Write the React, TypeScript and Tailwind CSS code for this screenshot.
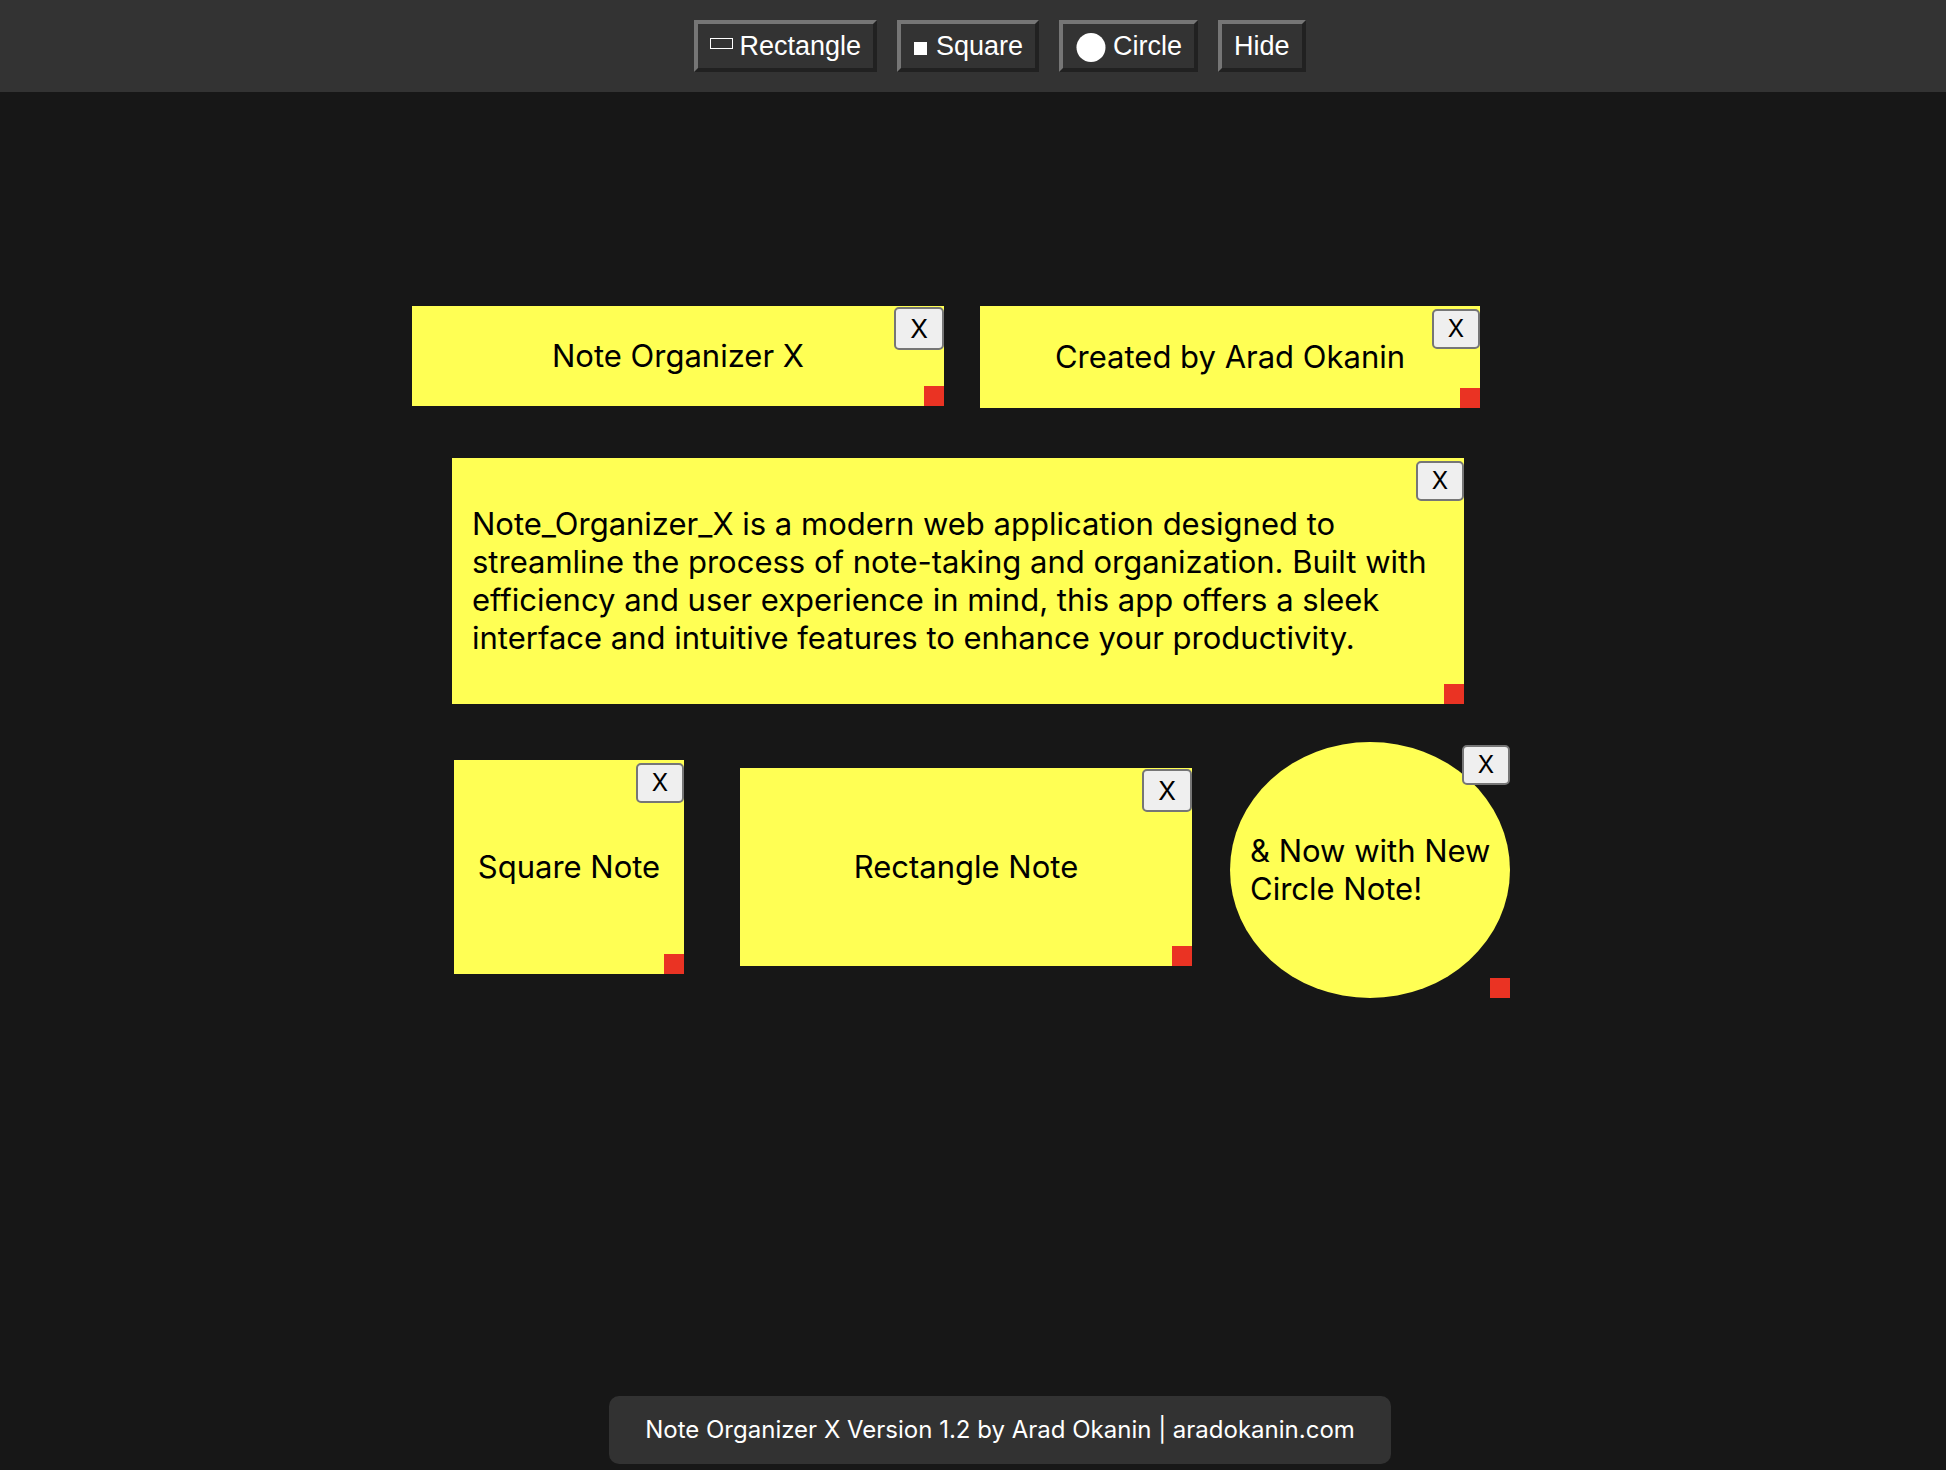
import { useState } from "react";
import type { ReactNode } from "react";

type Note = {
  id: number;
  text: string;
  place: string;
  size: string;
  round?: boolean;
  bigClose?: boolean;
};

const initialNotes: Note[] = [
  {
    id: 1,
    text: "Note Organizer X",
    place: "left-[412px] top-[214px]",
    size: "w-[532px] h-[100px]",
    bigClose: true,
  },
  {
    id: 2,
    text: "Created by Arad Okanin",
    place: "left-[980px] top-[214px]",
    size: "w-[500px] h-[102px]",
  },
  {
    id: 3,
    text: "Note_Organizer_X is a modern web application designed to streamline the process of note-taking and organization. Built with efficiency and user experience in mind, this app offers a sleek interface and intuitive features to enhance your productivity.",
    place: "left-[452px] top-[366px]",
    size: "w-[1012px] h-[246px]",
  },
  {
    id: 4,
    text: "Square Note",
    place: "left-[454px] top-[668px]",
    size: "w-[230px] h-[214px]",
  },
  {
    id: 5,
    text: "Rectangle Note",
    place: "left-[740px] top-[676px]",
    size: "w-[452px] h-[198px]",
    bigClose: true,
  },
  {
    id: 6,
    text: "& Now with New Circle Note!",
    place: "left-[1230px] top-[650px]",
    size: "w-[280px] h-[256px]",
    round: true,
  },
];

function ToolButton({ children, onClick }: { children: ReactNode; onClick?: () => void }) {
  return (
    <button
      type="button"
      onClick={onClick}
      className="flex h-[52px] items-center gap-1.5 border-4 border-t-[#767676] border-r-[#212121] border-b-[#212121] border-l-[#767676] px-3 font-['Liberation_Sans',Arial,sans-serif] text-[27px] leading-8 text-white"
    >
      {children}
    </button>
  );
}

function NoteCard({ note, onClose }: { note: Note; onClose: () => void }) {
  return (
    <article
      className={`absolute flex items-center justify-center bg-[#ffff54] text-[31px] leading-[38px] text-black ${note.place} ${note.size} ${
        note.round ? "rounded-[50%] pr-3 pl-5" : "px-5"
      }`}
    >
      <p>{note.text}</p>
      <button
        type="button"
        aria-label={`Close ${note.text}`}
        onClick={onClose}
        className={`absolute right-0 flex items-center justify-center rounded-[5px] border-2 border-[#767676] bg-[#efefef] leading-8 ${
          note.bigClose ? "top-px h-[43px] w-[50px] text-[26px]" : "top-[3px] h-10 w-12 text-2xl"
        }`}
      >
        X
      </button>
      <span className="absolute right-0 bottom-0 size-5 cursor-se-resize bg-[#ea3323]" />
    </article>
  );
}

export default function App() {
  const [notes, setNotes] = useState(initialNotes);
  const [hidden, setHidden] = useState(false);

  const addNote = (text: string, size: string, round = false) =>
    setNotes((all) => [
      ...all,
      { id: Date.now(), text, size, round, place: "left-[80px] top-[80px]" },
    ]);

  return (
    <div className="flex min-h-screen flex-col overflow-hidden bg-[#171717] font-[Inter,sans-serif]">
      <header className="flex h-[92px] items-center justify-center gap-5 bg-[#333333] pl-[54px]">
        <ToolButton onClick={() => addNote("Rectangle Note", "w-[452px] h-[198px]")}>
          <svg aria-hidden="true" width="23" height="20" viewBox="0 0 23 20" fill="none">
            <rect x="0.5" y="2.5" width="22" height="10" stroke="white" />
          </svg>
          Rectangle
        </ToolButton>
        <ToolButton onClick={() => addNote("Square Note", "w-[230px] h-[214px]")}>
          <svg aria-hidden="true" width="17" height="20" viewBox="0 0 17 20">
            <rect x="1" y="6" width="13" height="13" fill="white" />
          </svg>
          Square
        </ToolButton>
        <ToolButton onClick={() => addNote("Circle Note", "w-[280px] h-[256px]", true)}>
          <svg aria-hidden="true" width="32" height="32" viewBox="0 0 32 32">
            <circle cx="16" cy="17.5" r="14.5" fill="white" />
          </svg>
          Circle
        </ToolButton>
        <ToolButton onClick={() => setHidden(!hidden)}>Hide</ToolButton>
      </header>

      <main className="relative min-h-[920px] flex-1">
        {!hidden &&
          notes.map((note) => (
            <NoteCard
              key={note.id}
              note={note}
              onClose={() => setNotes((all) => all.filter((n) => n.id !== note.id))}
            />
          ))}
      </main>

      <footer className="flex justify-center pb-1.5 pl-[54px]">
        <p className="rounded-[10px] bg-[#323232] px-9 py-[18px] text-2xl leading-8 text-white">
          Note Organizer X Version 1.2 by Arad Okanin |{" "}
          <a href="https://aradokanin.com">aradokanin.com</a>
        </p>
      </footer>
    </div>
  );
}
